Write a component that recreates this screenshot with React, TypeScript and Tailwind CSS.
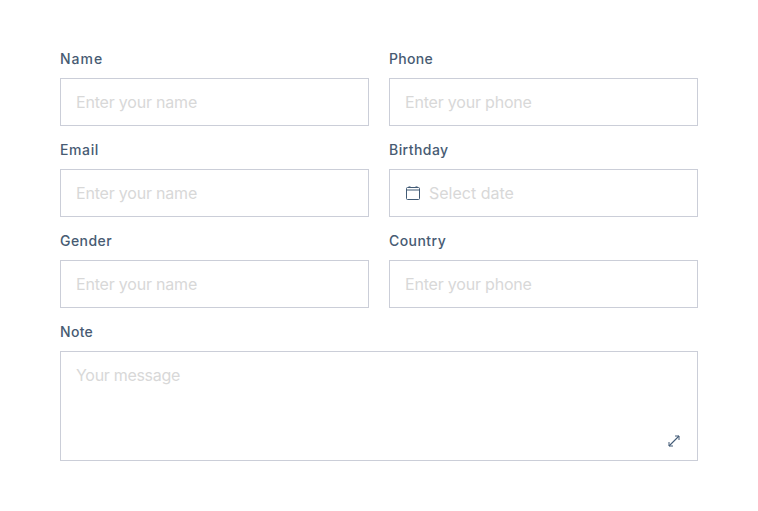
type FieldProps = {
  label: string;
  placeholder: string;
  labelClass: string;
  textClass?: string;
  icon?: boolean;
};

const fields: FieldProps[] = [
  { label: 'Name', placeholder: 'Enter your name', labelClass: 'tracking-[1px]' },
  { label: 'Phone', placeholder: 'Enter your phone', labelClass: 'tracking-[0.3px]' },
  { label: 'Email', placeholder: 'Enter your name', labelClass: 'tracking-[0.6px]' },
  { label: 'Birthday', placeholder: 'Select date', labelClass: 'tracking-[0.45px]', textClass: 'tracking-[0px]', icon: true },
  { label: 'Gender', placeholder: 'Enter your name', labelClass: 'tracking-[0.45px]' },
  { label: 'Country', placeholder: 'Enter your phone', labelClass: 'tracking-[0.45px]' },
];

function CalendarIcon() {
  return (
    <svg width="16" height="16" viewBox="0 0 16 16" fill="none" stroke="#425b76" className="mr-2 shrink-0">
      <rect x="1.5" y="2.5" width="13" height="12" rx="1" />
      <path d="M2 5h12" strokeWidth="2" opacity=".5" />
      <path d="M3.5 1.5h2M10.5 1.5h2" opacity=".6" />
    </svg>
  );
}

function ExpandIcon() {
  return (
    <svg width="12" height="12" viewBox="0 0 12 12" fill="none" stroke="#425b76">
      <path d="M11 1l-10 10" strokeWidth="1.1" />
      <path d="M7 1h4v4M1 7v4h4" />
    </svg>
  );
}

function Field({ label, placeholder, labelClass, textClass = 'tracking-[-0.2px]', icon }: FieldProps) {
  return (
    <div>
      <label className="block h-[28px] text-[14px] leading-[18px] font-medium text-[#475b73]">
        <span className={labelClass}>{label}</span>
      </label>
      <div className="flex h-12 items-center border border-[#cbced8] px-[15px] text-[16px] text-[#d8d8d8]">
        {icon && <CalendarIcon />}
        <span className={textClass}>{placeholder}</span>
      </div>
    </div>
  );
}

export default function App() {
  return (
    <div className="h-[511px] bg-white px-[60px] pt-[50px] font-['Inter',sans-serif]">
      <div className="grid grid-cols-2 gap-x-5 gap-y-[15px]">
        {fields.map((field) => (
          <Field key={field.label} {...field} />
        ))}
      </div>

      {/* Note */}
      <div className="mt-[15px]">
        <label className="block h-[28px] text-[14px] leading-[18px] font-medium tracking-[0.3px] text-[#475b73]">Note</label>
        <div className="flex h-[110px] justify-between border border-[#cbced8] pt-3 pr-[17px] pb-[13px] pl-[15px] text-[16px] leading-[22px] text-[#d8d8d8]">
          <span className="tracking-[-0.3px]">Your message</span>
          <div className="self-end">
            <ExpandIcon />
          </div>
        </div>
      </div>
    </div>
  );
}
